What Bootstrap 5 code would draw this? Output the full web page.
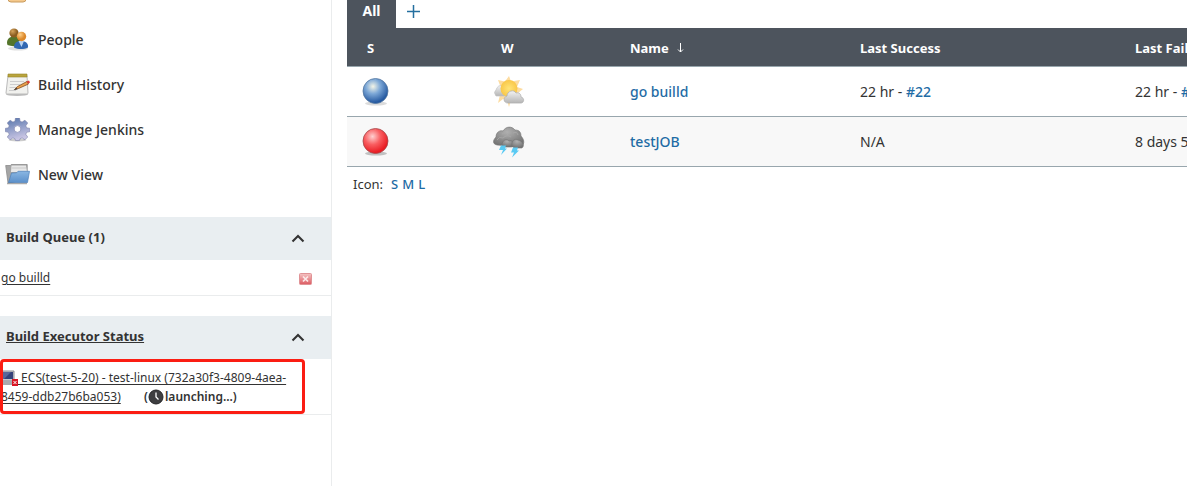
<!DOCTYPE html>
<html lang="en">
<head>
<meta charset="utf-8">
<meta name="viewport" content="width=device-width, initial-scale=1">
<title>Dashboard [Jenkins]</title>
<link rel="stylesheet" href="https://cdn.jsdelivr.net/npm/bootstrap@5.3.0/dist/css/bootstrap.min.css">
<style>
body { font-family: "Noto Sans", "Open Sans", sans-serif; font-size: 13px; line-height: 19px; color: #333; background: #fff; overflow: hidden; }
a { color: #1f6ca5; text-decoration: none; }
svg { display: block; flex: none; }
.side-panel { width: 332px; border-right: 1px solid #eaeced; }
.task { height: 45px; padding-left: 5px; gap: 8px; color: #333; font-size: 14px; font-weight: 500; }
.task-cut { height: 17px; overflow: hidden; align-items: flex-end; padding-bottom: 14px; }
.pane { margin-top: 20px; }
.pane-head { height: 43px; background: #e9eef1; padding: 0 26px 2px 6px; }
.pane-head h2, .pane-head h2 a { font-size: 13px; line-height: 19px; font-weight: 700; color: #333; }
.pane-head button { padding: 0; border: 0; background: none; }
.pane-row { border-bottom: 1px solid #eaeced; font-size: 12px; }
.pane-row a { color: #333; text-decoration: underline; text-underline-offset: 2px; }
.queue-row { height: 36px; padding: 0 19px 0 1px; }
.queue-row button { padding: 2px 0 0; border: 0; background: none; }
.executor-row { padding: 9px 36px 8px 1px; }
.executor-row svg { display: inline-block; vertical-align: -4px; }
.executor-state { margin-left: 20px; }
.marker { position: absolute; inset: 0 26px 0 0; border: 3px solid #fb1d13; border-radius: 4px; pointer-events: none; }
.view-main { padding-left: 15px; min-width: 0; overflow: hidden; }
.tab-bar { height: 28px; }
.tab-on { width: 49px; background: #4d545d; color: #fff; font-size: 14px; font-weight: 700; padding-bottom: 7px; }
.tab-add { padding: 5px 11px 0; }
.jobs { table-layout: fixed; width: 1051px; margin: 0; border-collapse: separate; border-spacing: 0; }
.jobs th, .jobs td { padding: 0 12px; border-bottom: 1px solid #98a6ad; white-space: nowrap; vertical-align: middle; }
.jobs th { height: 39px; padding-top: 2px; background: #4d545d; color: #fff; font-weight: 700; }
.jobs th.icon-col { padding-left: 20px; }
.jobs td { height: 50px; font-size: 14px; }
.jobs tbody tr:nth-child(2) td { background: #f8f8f8; }
.jobs td a { font-weight: 500; }
.c-s { width: 134px; } .c-w { width: 137px; } .c-name { width: 230px; } .c-last { width: 275px; }
.icon-size { padding: 8px 6px; gap: 4px; }
.icon-size a { font-weight: 500; }
</style>
</head>
<body>
<div class="d-flex min-vh-100">
  <aside class="side-panel flex-shrink-0">
    <nav class="d-flex flex-column" aria-label="Tasks">
      <a class="task task-cut d-flex" href="#" aria-label="New Item"><svg width="24" height="24" viewBox="0 0 24 24"><rect x="3" y="2" width="18" height="21" rx="3" fill="#f5c98c" stroke="#c99b5e"/></svg></a>
      <a class="task d-flex align-items-center" href="#">
        <svg width="25" height="24" viewBox="0 0 25 24"><defs><radialGradient id="h1" cx=".35" cy=".3"><stop offset="0" stop-color="#d6a55e"/><stop offset="1" stop-color="#8b5d20"/></radialGradient><radialGradient id="h2" cx=".35" cy=".3"><stop offset="0" stop-color="#ffd28a"/><stop offset="1" stop-color="#dc882a"/></radialGradient></defs><ellipse cx="13" cy="20.500" rx="10" ry="2" fill="#ccc" opacity=".6"/><path d="M2 15c0-4 2.500-6.500 7-6.500s7 3 6 8.500c-4 1.500-9 1.500-12.500 0z" fill="#54752b"/><circle cx="9" cy="5" r="4.600" fill="url(#h1)"/><path d="M9 19.500c0-4 2-6.500 7-6.500s7.500 2.500 7 6.500c-4 2-10 2-14 0z" fill="#3268b2"/><path d="M13.500 13h5.500L16.500 19z" fill="#b9d3f0"/><circle cx="16.500" cy="8.500" r="4.700" fill="url(#h2)"/></svg>
        People</a>
      <a class="task d-flex align-items-center" href="#">
        <svg width="25" height="24" viewBox="0 0 25 24"><ellipse cx="12" cy="21.500" rx="11" ry="1.500" fill="#bbb"/><path d="M3 2.500h19l1 17.500q0 1-1 1H2q-1 0-1-1z" fill="#f1f1ee" stroke="#bbb"/><path d="M3 1h19v3H3z" fill="#b9a43c" stroke="#948328" stroke-width=".6"/><path d="M5 8.500h14M5 11.500h10M4.500 14.500h8M4 17.500h7" stroke="#cdcdcd"/><path d="M9.500 16.500l3-3L22 8.500l1.500 2.500-10 4.500z" fill="#e9a04c" stroke="#7d4d23" stroke-width=".8"/><path d="M21.500 8.500l2.500-.9 1 2-2 1.200z" fill="#dc3d38"/><path d="M8.500 17l3-2 1 1.200z" fill="#333"/></svg>
        Build History</a>
      <a class="task d-flex align-items-center" href="#">
        <svg width="25" height="24" viewBox="0 0 25 24"><defs><linearGradient id="gg" x1="0" y1="0" x2=".3" y2="1"><stop offset="0" stop-color="#5474aa"/><stop offset="1" stop-color="#c9c5e4"/></linearGradient></defs><ellipse cx="12.500" cy="22" rx="9" ry="1.500" fill="#ccc"/><path transform="translate(0 -1)" fill="url(#gg)" stroke="#7b80a8" stroke-width=".6" d="M10.500 1h4l.6 3.300 2 .8 2.800-1.900 2.800 2.800-1.900 2.800.8 2 3.300.6v3.200l-3.300.7-.8 2 1.900 2.700-2.800 2.800-2.800-1.900-2 .8-.6 1.800h-4l-.6-1.800-2-.8-2.800 1.900L2.300 20l1.900-2.700-.8-2L.2 14.600v-3.200l3.200-.6.8-2L2.300 6l2.800-2.800 2.800 1.900 2-.8z"/><circle cx="12.500" cy="11" r="3.400" fill="#fff" stroke="#959ac0"/></svg>
        Manage Jenkins</a>
      <a class="task d-flex align-items-center" href="#">
        <svg width="25" height="24" viewBox="0 0 25 24"><defs><linearGradient id="fb" x1="0" y1="0" x2="0" y2="1"><stop offset="0" stop-color="#8ab7e3"/><stop offset="1" stop-color="#5c90ca"/></linearGradient></defs><path d="M2 20.500h20" stroke="#aaa" stroke-width="1.500"/><path d="M.7 2.500h5l.5-1h16v15L3 20z" fill="#a5a5a5" stroke="#8b8b8b" stroke-width=".8"/><path d="M6.500 2.500h14.500L22 9H6z" fill="#e8e8e8"/><path d="M7 5h14" stroke="#c8c8c8"/><path d="M6.500 10l5-.2L13 8.300h11.500l-2 11.200H3.500z" fill="url(#fb)" stroke="#4d80b9" stroke-width=".7"/></svg>
        New View</a>
    </nav>

    <section class="pane">
      <div class="pane-head d-flex align-items-center justify-content-between">
        <h2 class="m-0">Build Queue (1)</h2>
        <button type="button" aria-label="Collapse build queue"><svg width="14" height="14" viewBox="0 0 14 14"><path d="M1.500 10.500L7 5l5.500 5.500" fill="none" stroke="#333" stroke-width="2.100"/></svg></button>
      </div>
      <div class="pane-row queue-row d-flex align-items-center justify-content-between">
        <a href="#">go builld</a>
        <button type="button" aria-label="Cancel build"><svg width="13" height="12" viewBox="0 0 13 12"><defs><linearGradient id="cx" x1="0" y1="0" x2="0" y2="1"><stop offset="0" stop-color="#f5c4c4"/><stop offset="1" stop-color="#dc5a61"/></linearGradient></defs><rect x=".5" y=".5" width="12" height="11" rx="1" fill="url(#cx)" stroke="#e09396"/><path d="M4 3.500l5 5m0-5l-5 5" stroke="#fbeaea" stroke-width="1.700"/></svg></button>
      </div>
    </section>

    <section class="pane">
      <div class="pane-head d-flex align-items-center justify-content-between">
        <h2 class="m-0"><a class="text-decoration-underline" href="#">Build Executor Status</a></h2>
        <button type="button" aria-label="Collapse executor status"><svg width="14" height="14" viewBox="0 0 14 14"><path d="M1.500 10.500L7 5l5.500 5.500" fill="none" stroke="#333" stroke-width="2.100"/></svg></button>
      </div>
      <div class="pane-row executor-row position-relative">
        <a href="#"><svg width="17" height="16" viewBox="0 0 17 16"><path d="M1 1h12v10H1z" fill="#c6c7cc" stroke="#8b8d96"/><path d="M2 2h10v7H2z" fill="#34427a"/><path d="M2 2h8L3 9H2z" fill="#596699"/><path d="M1 11h11l2 4H0z" fill="#a9a9ad"/><path d="M11 9h6v7h-6z" fill="#d91524"/><path d="M12.500 11l3 3m0-3l-3 3" stroke="#fff"/></svg> ECS(test-5-20) - test-linux (732a30f3-4809-4aea-8459-ddb27b6ba053)</a>
        <span class="executor-state fw-semibold text-nowrap">(<svg width="16" height="16" viewBox="0 0 16 16"><circle cx="8" cy="8" r="7" fill="#3e3e40" stroke="#252527"/><path d="M8 3.500V8l2.500 2.500" fill="none" stroke="#fff" stroke-width="1.300"/></svg>&#8202;launching...)</span>
        <span class="marker"></span>
      </div>
    </section>
  </aside>

  <main class="view-main flex-grow-1">
    <div class="tab-bar d-flex">
      <a class="tab-on d-flex align-items-center justify-content-center" href="#">All</a>
      <a class="tab-add" href="#" aria-label="New view"><svg width="13" height="13" viewBox="0 0 13 13"><path d="M6.500 0v13M0 6.500h13" stroke="#246f9f" stroke-width="1.500"/></svg></a>
    </div>
    <table class="jobs">
      <colgroup><col class="c-s"><col class="c-w"><col class="c-name"><col class="c-last"><col class="c-last"></colgroup>
      <thead><tr><th class="icon-col" scope="col">S</th><th class="icon-col" scope="col">W</th><th scope="col"><span class="d-flex align-items-center gap-2">Name <svg width="7" height="10" viewBox="0 0 7 10"><path d="M3.500 0v9M1 6.500L3.500 9 6 6.500" fill="none" stroke="#fff"/></svg></span></th><th scope="col">Last Success</th><th scope="col">Last Failure</th></tr></thead>
      <tbody>
        <tr>
          <td><svg width="32" height="32" viewBox="0 0 32 32" role="img" aria-label="Success"><defs><radialGradient id="bb" cx=".4" cy=".32" r=".65"><stop offset="0" stop-color="#f4f5e7"/><stop offset=".45" stop-color="#7da8d7"/><stop offset="1" stop-color="#2458a0"/></radialGradient></defs><ellipse cx="17" cy="27.500" rx="11" ry="2" fill="#ccc" opacity=".7"/><circle cx="16.500" cy="15" r="12.500" fill="url(#bb)" stroke="#54779f" stroke-width=".8"/></svg></td>
          <td><svg width="32" height="32" viewBox="0 0 32 32" role="img" aria-label="Partly sunny"><defs><radialGradient id="sun"><stop offset="0" stop-color="#ffe477"/><stop offset="1" stop-color="#f9c748"/></radialGradient><linearGradient id="cl" x1="0" y1="0" x2="0" y2="1"><stop offset="0" stop-color="#f3f3f3"/><stop offset="1" stop-color="#b5b5b5"/></linearGradient></defs><path d="M16 0l2 5.500L27 4l-3 7 6 2-5 4-3 6-4 1-2 7-2-7-4-1-5 4 2-8-2-5-1-1 4-1-3-8 7 1.500z" fill="#fddca0"/><path d="M3 20q-3-4 0-6 2-6 7-4l3 10z" fill="url(#cl)" stroke="#c4c4c4" stroke-width=".7"/><circle cx="16" cy="12.500" r="8.500" fill="url(#sun)"/><path d="M15 27c-5 0-5-6-1-7 0-5 7-7 9-3 4-1 5 2 5 4 4 1 3 6 0 6z" fill="url(#cl)" stroke="#b0b0b0" stroke-width=".8"/></svg></td>
          <td><a href="#">go builld</a></td><td>22 hr - <a href="#">#22</a></td><td>22 hr - <a href="#">#21</a></td>
        </tr>
        <tr>
          <td><svg width="32" height="32" viewBox="0 0 32 32" role="img" aria-label="Failed"><defs><radialGradient id="rb" cx=".38" cy=".32" r=".65"><stop offset="0" stop-color="#ffd0d0"/><stop offset=".5" stop-color="#f95d60"/><stop offset="1" stop-color="#e91c23"/></radialGradient></defs><ellipse cx="17" cy="27.500" rx="11" ry="2" fill="#aaa" opacity=".7"/><circle cx="16.500" cy="15" r="12.500" fill="url(#rb)" stroke="#a24a4d" stroke-width=".8"/></svg></td>
          <td><svg width="32" height="32" viewBox="0 0 32 32" role="img" aria-label="Storm"><defs><radialGradient id="st" cx=".45" cy=".25" r=".7"><stop offset="0" stop-color="#b0b0b0"/><stop offset="1" stop-color="#747474"/></radialGradient></defs><g fill="url(#st)" stroke="#747474" stroke-width=".6"><path d="M4 19c-5-1-4-5-1-8 0-5 4-7 7-6 3-5 9-5 12-1 5 0 6 3 6 6 4 4 4 10-2 11z"/><path d="M9 19c0-5 5-7 7-4 3-1 4 1 4 3 1 2 0 3-2 3h-6q-3 0-3-2z"/><path d="M19 20c-1-5 3-8 6-6 5 1 7 6 4 8h-8z"/></g><path d="M4 14q2-4 6-2 4-4 8-1M9 8q4-3 6 1m5-2q4-2 5 2" fill="none" stroke="#aaa" stroke-width=".8"/><path d="M8 19.500h5l-1 3h2l-6 6.500 2-5H6zm12 2h5l-1 3h2l-7 7 2-5h-3z" fill="#5acaf3"/></svg></td>
          <td><a href="#">testJOB</a></td><td>N/A</td><td>8 days 5 hr</td>
        </tr>
      </tbody>
    </table>
    <div class="icon-size d-flex"><span class="me-1">Icon:</span><a href="#">S</a><a href="#">M</a><a href="#">L</a></div>
  </main>
</div>
<script src="https://cdn.jsdelivr.net/npm/bootstrap@5.3.0/dist/js/bootstrap.bundle.min.js"></script>
</body>
</html>
